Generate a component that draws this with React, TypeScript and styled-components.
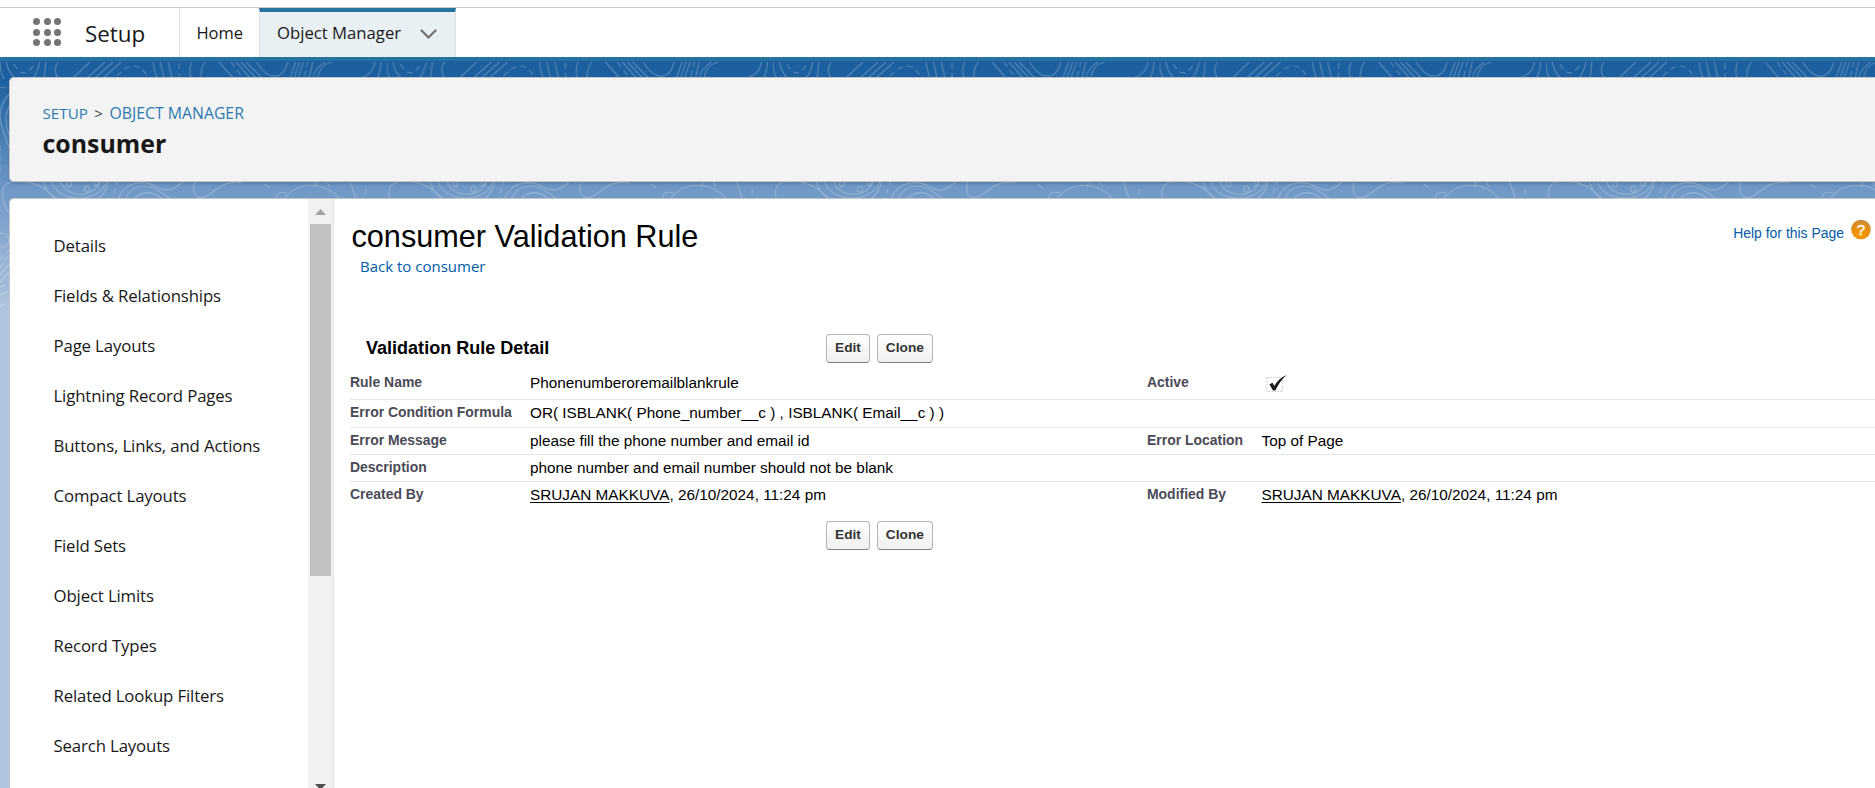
import React from 'react';
import styled, { createGlobalStyle, css } from 'styled-components';

const ui = '"Open Sans", "Noto Sans", sans-serif';
const arial = '"Liberation Sans", Arial, sans-serif';

const GlobalStyle = createGlobalStyle`
  *, *::before, *::after { box-sizing: border-box; }
  body { margin: 0; overflow: hidden; background: #fff; font-family: ${ui}; color: #181818; }
  a { color: inherit; text-decoration: none; }
`;

const Page = styled.div`
  display: flex;
  flex-direction: column;
  height: 100vh;
  overflow: hidden;
`;

/* ---------- top navigation ---------- */

const TopLine = styled.div`
  flex: none;
  height: 8px;
  border-bottom: 1px solid #c9c9c9;
`;

const NavBar = styled.nav`
  flex: none;
  display: flex;
  height: 53px;
  border-bottom: 4px solid #26739f;
  background: #fff;
`;

const Launcher = styled.div`
  display: grid;
  grid-template-columns: repeat(3, 7px);
  gap: 3.5px;
  align-content: center;
  padding: 0 0 0 33px;
  width: 85px;
  margin-top: -1px;
`;

const Dot = styled.span`
  width: 7px;
  height: 7px;
  border-radius: 50%;
  background: #747474;
`;

const AppName = styled.div`
  width: 95px;
  border-right: 1px solid #e0e0e0;
  font-size: 22.4px;
  line-height: 52px;
`;

const NavItem = styled.a`
  width: 79px;
  padding-left: 16.5px;
  font-size: 16.5px;
  line-height: 49px;
  letter-spacing: -0.05px;
`;

const ActiveTab = styled.a`
  display: flex;
  align-items: center;
  justify-content: space-between;
  width: 197px;
  padding: 0 18px 0 17px;
  border-top: 4px solid #26739f;
  border-left: 1px solid #d9dfe3;
  border-right: 1px solid #d9dfe3;
  background: #e9f0f4;
  font-size: 16.7px;
  line-height: 41px;

  span { margin-top: -4px; }
`;

/* ---------- canvas ---------- */

const Canvas = styled.div`
  position: relative;
  flex: 1;
  min-height: 0;
  display: flex;
  flex-direction: column;
  gap: 16px;
  padding: 16px 0 0 9px;
  background: linear-gradient(#1b5f9e 0, #1c60a0 18px, #7099c6 130px, #b0c4df 250px);
`;

const Contours = styled.svg`
  position: absolute;
  inset: 0;
  width: 100%;
  height: 100%;
`;

const panel = css`
  position: relative;
  border: 1px solid #c3c5c9;
  border-right: 0;
  border-radius: 5px 0 0 5px;
`;

const HeaderCard = styled.header`
  ${panel}
  flex: none;
  height: 105px;
  padding: 24px 32.5px;
  background: #f3f3f3;
  box-shadow: 0 2px 3px rgba(0, 0, 0, 0.15);
`;

const Crumbs = styled.div`
  display: flex;
  gap: 6.5px;
  font-size: 15.2px;
  line-height: 23px;
  color: #2b7ab0;

  a + span { color: #444; }
  span + a { font-size: 15.8px; }
`;

const ObjectName = styled.h1`
  margin: 0;
  font-size: 24.9px;
  line-height: 36px;
  font-weight: 700;
`;

const ContentCard = styled.div`
  ${panel}
  flex: 1;
  min-height: 0;
  display: flex;
  border-bottom: 0;
  border-bottom-left-radius: 0;
  background: #fff;
  overflow: hidden;
`;

/* ---------- sidebar ---------- */

const SideMenu = styled.aside`
  width: 298px;
  padding: 22px 0 0 43.5px;
`;

const SideLink = styled.a`
  display: block;
  height: 50px;
  font-size: 16.8px;
  line-height: 50px;
  letter-spacing: -0.14px;
`;

const ScrollTrack = styled.div`
  display: flex;
  flex-direction: column;
  justify-content: space-between;
  align-items: center;
  width: 26px;
  height: 600px;
  padding: 0 2px 0 1px;
  border-right: 1px solid #e2e2e2;
  background: #f1f1f1;
`;

const ScrollArrow = styled.svg`
  display: block;
  flex: none;
  width: 21px;
  height: 25px;
`;

const ScrollThumb = styled.div`
  width: 21px;
  height: 352px;
  margin-bottom: auto;
  background: #c1c1c1;
`;

/* ---------- detail ---------- */

const Detail = styled.main`
  flex: 1;
  padding: 17px 0 0 16px;
  font-family: ${arial};
  color: #000;
`;

const TitleRow = styled.div`
  display: flex;
  justify-content: space-between;
  padding-right: 4px;
`;

const Title = styled.h2`
  margin: 0 0 0 1.5px;
  font-size: 30.65px;
  line-height: 40px;
  font-weight: 400;
`;

const BackLink = styled.a`
  display: block;
  margin: -1px 0 0 10px;
  font: 15px/22px ${ui};
  color: #015ba7;
`;

const Help = styled.a`
  display: flex;
  align-items: center;
  gap: 7px;
  height: 24px;
  margin-top: 1px;
  color: #015ba7;
  font-size: 13.95px;

  span { margin-top: 8px; }
`;

const ButtonBar = styled.div<{ $top: number }>`
  display: flex;
  align-items: center;
  gap: 7px;
  height: 28px;
  margin-top: ${p => p.$top}px;
`;

const SectionTitle = styled.h3`
  width: 469px;
  margin: 0;
  padding-left: 16px;
  font-size: 18.05px;
  line-height: 26px;
`;

const Button = styled.button`
  height: 29px;
  padding: 0 8px 1px;
  border: 1px solid #b5b5b5;
  border-bottom-color: #7f7f7f;
  border-radius: 4px;
  background: linear-gradient(#fff, #f0f0f0);
  font: bold 13.7px ${arial};
  color: #333;
`;

const Fields = styled.dl`
  margin: 6px 0 0;
`;

const FieldRow = styled.div<{ $height: number; $top: number; $line?: boolean }>`
  display: grid;
  grid-template-columns: 180px 617px 114.5px 1fr;
  height: ${p => p.$height}px;
  padding-top: ${p => p.$top}px;
  border-bottom: ${p => (p.$line === false ? '0' : '1px solid #e8e8ea')};
`;

const Label = styled.dt`
  font-size: 13.95px;
  line-height: 18px;
  font-weight: 700;
  color: #4a4a56;
`;

const Value = styled.dd`
  margin: 0;
  font-size: 15.33px;
  line-height: 19px;
  white-space: nowrap;

  a { text-decoration: underline; text-underline-offset: 2px; }
`;

const CheckIcon = styled.svg`
  display: block;
  margin: 1px 0 0 4px;
`;

const menu = [
  'Details', 'Fields & Relationships', 'Page Layouts', 'Lightning Record Pages',
  'Buttons, Links, and Actions', 'Compact Layouts', 'Field Sets', 'Object Limits',
  'Record Types', 'Related Lookup Filters', 'Search Layouts',
];

const author = <><a href="#">SRUJAN MAKKUVA</a>, 26/10/2024, 11:24 pm</>;

const checked = (
  <CheckIcon width="22" height="20" viewBox="0 0 22 20" fill="none">
    <rect x="1" y="3.500" width="15.5" height="14" stroke="#c4c4c4" strokeDasharray="1.5 1.5" />
    <path d="M3.4 10.2 L6.5 8.8 L8.3 12 C11 7 15 3.200 20.600 1 C15.500 5.500 12.200 10.500 9.300 16.500 L7 16.500 Z" fill="#1a1a1a" />
  </CheckIcon>
);

type Row = { label: string; value: React.ReactNode; label2?: string; value2?: React.ReactNode; height: number; top: number };

const fields: Row[] = [
  { label: 'Rule Name', value: 'Phonenumberoremailblankrule', label2: 'Active', value2: checked, height: 32, top: 5 },
  { label: 'Error Condition Formula', value: 'OR( ISBLANK( Phone_number__c ) , ISBLANK( Email__c ) )', height: 28, top: 3 },
  { label: 'Error Message', value: 'please fill the phone number and email id', label2: 'Error Location', value2: 'Top of Page', height: 27, top: 3 },
  { label: 'Description', value: 'phone number and email number should not be blank', height: 27, top: 3 },
  { label: 'Created By', value: author, label2: 'Modified By', value2: author, height: 25, top: 3 },
];

function Background() {
  return (
    <Contours>
      <defs>
        <pattern id="contours" x="0" y="0" width="386.5" height="250" patternUnits="userSpaceOnUse">
          <g fill="none" stroke="#fff" strokeOpacity="0.23" strokeWidth="1.2">
            <path d="M0 1Q0 12 4 18M6 0C8 9 11 15 16 18M40 0Q38 12 32 18M46 0L44 18M58 1Q52 10 59 18M90 1L73 17M105 1L87 17M113 1L95 17M121 1L103 17" />
            <path d="M153 0Q154 10 157 17M160 0L164 17M168 0L172 17M192 0Q188 9 191 17M206 0Q200 7 201 17M219 1L233 17M236 1L250 17M241 1L256 17M246 1L262 17" />
            <path d="M256 0C264 13 270 16 277 15C284 13 286 7 288 0M296 0L290 17M300 0L294 17M304 0L298 17M313 0L309 17M332 1Q319 4 318 17M325 1Q314 8 313 17M375 0Q374 13 360 17M381 0Q381 10 377 17" />
            <path strokeDasharray="6 4" d="M14 3Q24 21 34 3M117 15Q136 -5 147 15M179 2V17M231 1L243 17M308 0L304 17M0 26L6 27M0 84V110" />
            <path d="M9 33Q-4 48 2 66T9 87M9 45Q3 58 9 74" />
            <path d="M3 137Q0 123 12 121Q30 118 45 128L58 139M3 137Q5 149 9 151M43 120Q48 136 60 139M51 119C56 143 102 143 107 119M60 119C65 138 96 138 100 119" />
            <ellipse cx="69" cy="123" rx="2.3" ry="3" />
            <ellipse cx="87" cy="128" rx="2.5" ry="3" />
            <path d="M95 119V125Q99 125 99 121M118 138C125 119 145 119 157 126S175 127 184 120M125 138C132 123 148 121 162 132L172 139M134 138Q147 125 162 138" />
            <path d="M195 119C190 137 200 140 210 133S226 119 243 122M264 123L270 127M276 138Q276 129 287 132M285 136C300 120 325 120 340 138M314 126L317 120M326 120L330 126M350 120L356 138M109 119C106 132 100 137 96 139" />
            <path strokeDasharray="5 4" d="M118 119L112 138M366 128L365 139M0 198L9 190M0 226L9 222M0 245L9 242" />
            <circle cx="2" cy="179" r="7" />
            <path d="M0 207L9 194M0 214L9 203M0 221L9 211M0 234L9 230" />
          </g>
        </pattern>
      </defs>
      <rect y="1" width="100%" height="248" fill="url(#contours)" />
    </Contours>
  );
}

function FormButtons() {
  return <><Button>Edit</Button><Button>Clone</Button></>;
}

export default function App() {
  return (
    <Page>
      <GlobalStyle />
      <TopLine />
      <NavBar>
        <Launcher>{Array.from({ length: 9 }, (_, i) => <Dot key={i} />)}</Launcher>
        <AppName>Setup</AppName>
        <NavItem href="#">Home</NavItem>
        <ActiveTab href="#">
          <span>Object Manager</span>
          <svg width="17" height="11" viewBox="0 0 17 11" fill="none" stroke="#747474" strokeWidth="2.4" strokeLinecap="round" strokeLinejoin="round">
            <path d="M1.500 1.500 L8.500 8.500 L15.500 1.500" />
          </svg>
        </ActiveTab>
      </NavBar>
      <Canvas>
        <Background />
        <HeaderCard>
          <Crumbs><a href="#">SETUP</a><span>&gt;</span><a href="#">OBJECT MANAGER</a></Crumbs>
          <ObjectName>consumer</ObjectName>
        </HeaderCard>
        <ContentCard>
          <SideMenu>{menu.map(m => <SideLink key={m} href="#">{m}</SideLink>)}</SideMenu>
          <ScrollTrack>
            <ScrollArrow viewBox="0 0 21 25"><path d="M5 16 L10.500 10 L16 16Z" fill="#a3a3a3" /></ScrollArrow>
            <ScrollThumb />
            <ScrollArrow viewBox="0 0 21 25"><path d="M5 10 L10.500 16 L16 10Z" fill="#505050" /></ScrollArrow>
          </ScrollTrack>
          <Detail>
            <TitleRow>
              <Title>consumer Validation Rule</Title>
              <Help href="#">
                <span>Help for this Page</span>
                <svg width="20" height="21" viewBox="0 0 20 21">
                  <defs>
                    <radialGradient id="amber" cx="0.45" cy="0.75" r="0.7">
                      <stop offset="0" stopColor="#f79a00" />
                      <stop offset="0.6" stopColor="#e98f0c" />
                      <stop offset="1" stopColor="#c98a35" />
                    </radialGradient>
                  </defs>
                  <circle cx="10" cy="10.500" r="9.800" fill="url(#amber)" />
                  <text x="10" y="15.800" textAnchor="middle" fontSize="15" fontWeight="400" stroke="#fff" strokeWidth="0.4" fill="#fff">?</text>
                </svg>
              </Help>
            </TitleRow>
            <BackLink href="#">Back to consumer</BackLink>
            <ButtonBar $top={57}>
              <SectionTitle>Validation Rule Detail</SectionTitle>
              <FormButtons />
            </ButtonBar>
            <Fields>
              {fields.map((f, i) => (
                <FieldRow key={f.label} $height={f.height} $top={f.top} $line={i < fields.length - 1}>
                  <Label>{f.label}</Label>
                  <Value>{f.value}</Value>
                  {f.label2 && <Label>{f.label2}</Label>}
                  {f.value2 && <Value>{f.value2}</Value>}
                </FieldRow>
              ))}
            </Fields>
            <ButtonBar $top={14}>
              <SectionTitle as="div" />
              <FormButtons />
            </ButtonBar>
          </Detail>
        </ContentCard>
      </Canvas>
    </Page>
  );
}
